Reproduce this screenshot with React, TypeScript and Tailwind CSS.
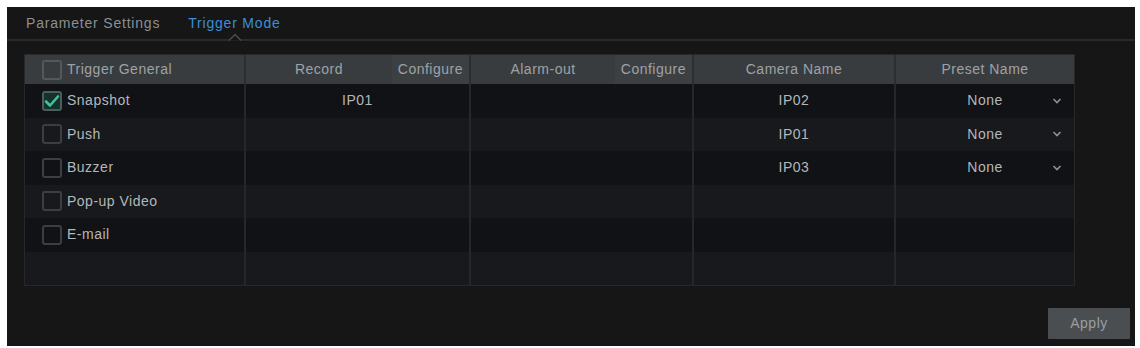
import React from "react";

const font = { fontFamily: '"Liberation Sans", Arial, sans-serif' };

function Check({ checked, header }: { checked?: boolean; header?: boolean }) {
  return (
    <span
      className={
        "flex h-[20px] w-[20px] shrink-0 items-center justify-center rounded-[3px] border-2 " +
        (checked
          ? "border-[#4a5f5a] bg-[#16302c]"
          : header
          ? "border-[#54585c] bg-transparent"
          : "border-[#3c3f42] bg-transparent")
      }
    >
      {checked && (
        <svg width="16" height="14" viewBox="0 0 16 14">
          <path d="M2 7.5 L6 11.5 L14 2.5" fill="none" stroke="#3fc29f" strokeWidth="2.6" strokeLinecap="round" strokeLinejoin="round" />
        </svg>
      )}
    </span>
  );
}

const triggers = [
  { name: "Snapshot", checked: true, record: "IP01", cam: "IP02", preset: "None" },
  { name: "Push", cam: "IP01", preset: "None" },
  { name: "Buzzer", cam: "IP03", preset: "None" },
  { name: "Pop-up Video" },
  { name: "E-mail" },
  { name: "" },
] as { name: string; checked?: boolean; record?: string; cam?: string; preset?: string }[];

function Chevron() {
  return (
    <svg width="10" height="7" viewBox="0 0 10 7" className="absolute right-[12px] top-1/2 -translate-y-1/2">
      <path d="M1.5 1.5 L5 5 L8.5 1.5" fill="none" stroke="#8d9196" strokeWidth="1.6" />
    </svg>
  );
}

export default function App() {
  return (
    <div className="w-[1140px] h-[348px] bg-white pl-[7px] pt-[7px]" style={font}>
      <div className="w-[1128px] h-[339px] bg-[#161616] flex flex-col">
        <div className="h-[34px] flex items-center gap-[28px] pl-[19px] text-[14px] tracking-[0.8px] border-b-2 border-[#2a2a2a] relative">
          <span className="text-[#8c8f93]">Parameter Settings</span>
          <span className="text-[#3b8ed8] relative">
            Trigger Mode
            <svg width="14" height="8" viewBox="0 0 14 8" className="absolute left-[40px] top-[20px]">
              <path d="M1 7.5 L7 1.5 L13 7.5" fill="#161616" stroke="#4a4c4e" strokeWidth="1.5" />
            </svg>
          </span>
        </div>
        <div className="ml-[17px] mt-[13px] w-[1051px] border border-[#26282a] text-[14px] tracking-[0.5px]">
          <div className="flex h-[29px] bg-[#393c3f] text-[#9ea2a6] items-center">
            <div className="w-[221px] h-full flex items-center gap-[5px] pl-[17px] border-r-2 border-[#2c2e30]">
              <Check header />
              <span>Trigger General</span>
            </div>
            <div className="w-[225px] h-full flex items-center border-r-2 border-[#2c2e30]">
              <span className="w-[146px] text-center">Record</span>
              <span className="flex-1 h-full flex items-center justify-end pr-[6px] bg-[#3d4043]">Configure</span>
            </div>
            <div className="w-[223px] h-full flex items-center border-r-2 border-[#2c2e30]">
              <span className="w-[144px] text-center">Alarm-out</span>
              <span className="flex-1 h-full flex items-center justify-end pr-[6px] bg-[#3d4043]">Configure</span>
            </div>
            <div className="w-[202px] h-full flex items-center justify-center border-r-2 border-[#2c2e30]">Camera Name</div>
            <div className="flex-1 h-full flex items-center justify-center">Preset Name</div>
          </div>
          {triggers.map((t, i) => (
            <div
              key={i}
              className={"flex h-[33.5px] items-center text-[#b4b7ba] " + (i % 2 === 0 ? "bg-[#101215]" : "bg-[#17191c]")}
            >
              <div className="w-[221px] h-full flex items-center gap-[5px] pl-[17px] border-r-2 border-[#25272a]">
                {t.name && <Check checked={t.checked} />}
                <span>{t.name}</span>
              </div>
              <div className="w-[225px] h-full flex items-center justify-center border-r-2 border-[#25272a]">{t.record}</div>
              <div className="w-[223px] h-full border-r-2 border-[#25272a]" />
              <div className="w-[202px] h-full flex items-center justify-center border-r-2 border-[#25272a]">{t.cam}</div>
              <div className="flex-1 h-full flex items-center justify-center relative">
                {t.preset && (
                  <>
                    <span>{t.preset}</span>
                    <Chevron />
                  </>
                )}
              </div>
            </div>
          ))}
        </div>
        <div className="flex-1 flex items-end justify-end pr-[5px] pb-[7px]">
          <div className="w-[82px] h-[31px] bg-[#4b4e51] text-[#9a9ea2] text-[14px] tracking-[0.5px] flex items-center justify-center rounded-[1px]">
            Apply
          </div>
        </div>
      </div>
    </div>
  );
}
